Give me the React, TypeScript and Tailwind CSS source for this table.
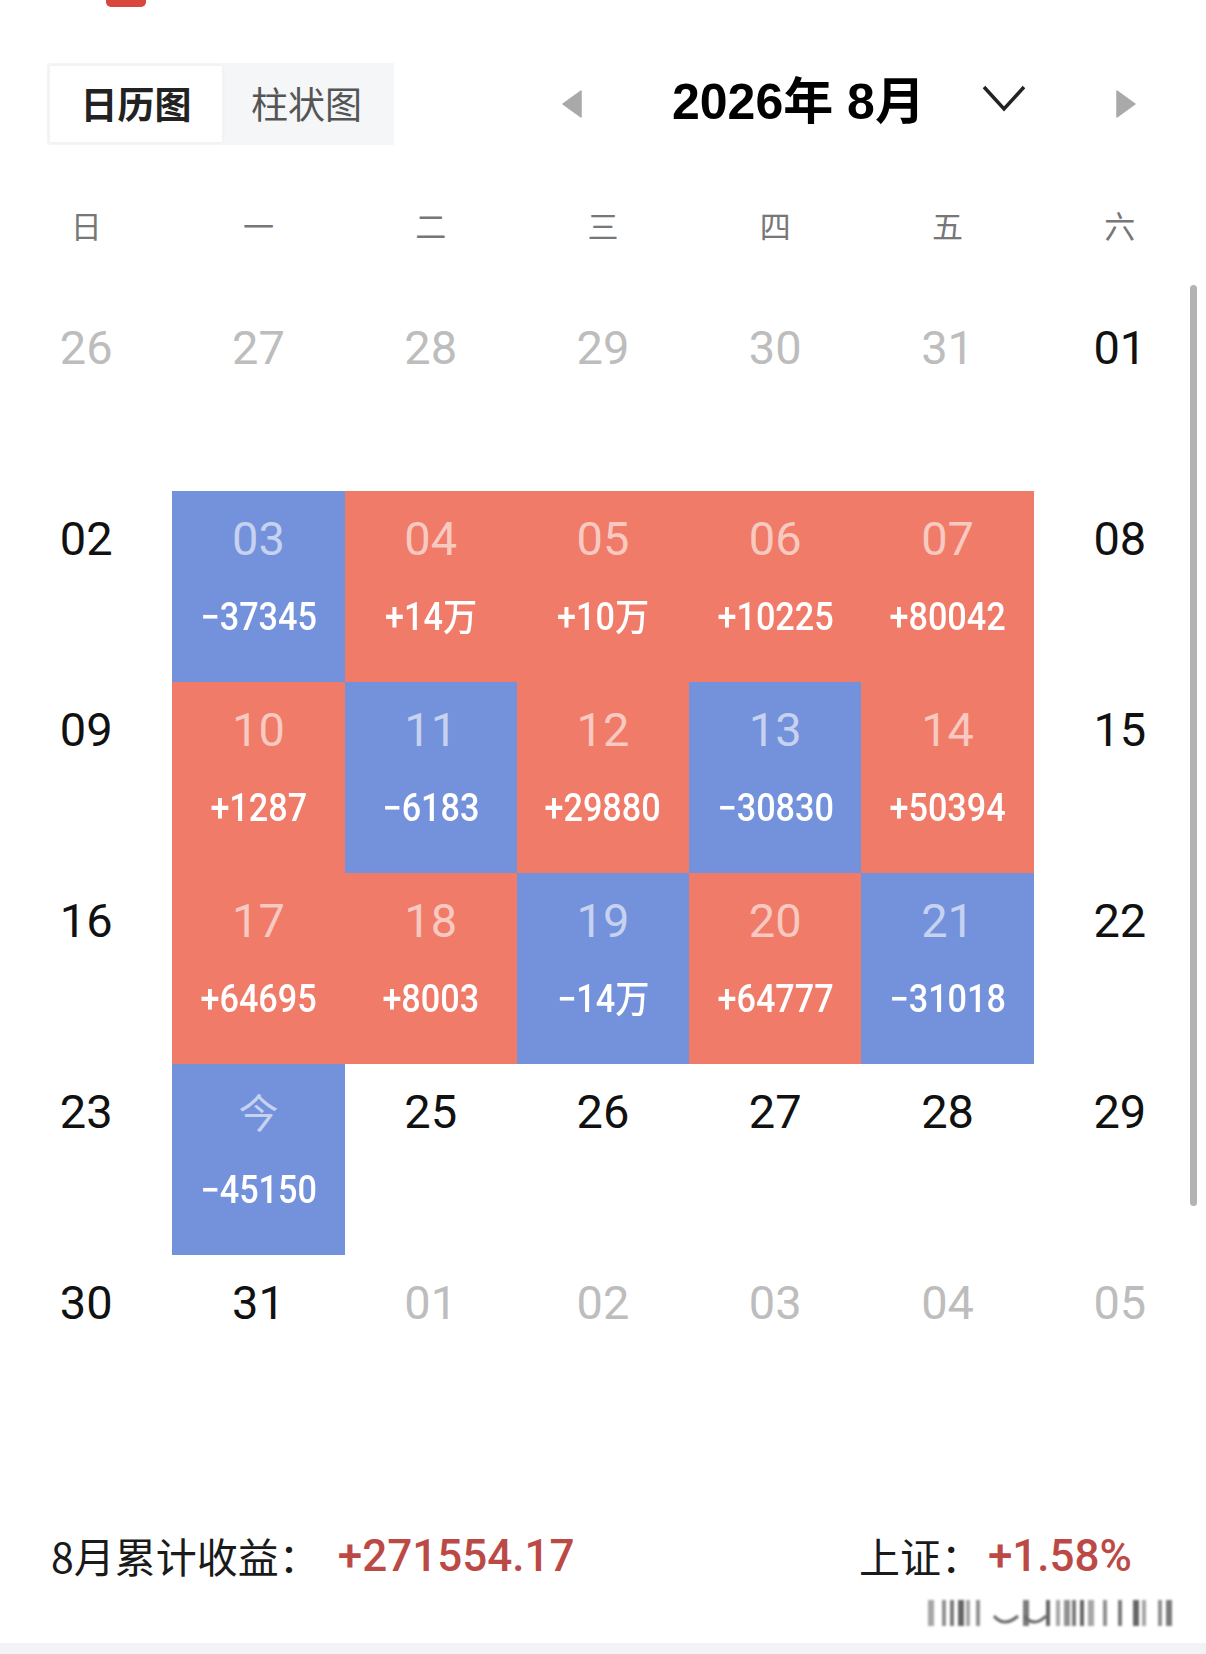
import React from 'react';

type Tone = 'muted' | 'normal' | 'red' | 'blue';

interface Day {
  label: string;
  tone: Tone;
  value?: string;
}

const m = (label: string): Day => ({ label, tone: 'muted' });
const n = (label: string): Day => ({ label, tone: 'normal' });
const r = (label: string, value: string): Day => ({ label, tone: 'red', value });
const b = (label: string, value: string): Day => ({ label, tone: 'blue', value });

const weekdays = ['日', '一', '二', '三', '四', '五', '六'];

const weeks: Day[][] = [
  [m('26'), m('27'), m('28'), m('29'), m('30'), m('31'), n('01')],
  [n('02'), b('03', '−37345'), r('04', '+14万'), r('05', '+10万'), r('06', '+10225'), r('07', '+80042'), n('08')],
  [n('09'), r('10', '+1287'), b('11', '−6183'), r('12', '+29880'), b('13', '−30830'), r('14', '+50394'), n('15')],
  [n('16'), r('17', '+64695'), r('18', '+8003'), b('19', '−14万'), r('20', '+64777'), b('21', '−31018'), n('22')],
  [n('23'), b('今', '−45150'), n('25'), n('26'), n('27'), n('28'), n('29')],
  [n('30'), n('31'), m('01'), m('02'), m('03'), m('04'), m('05')],
];

function DayCell({ day }: { day: Day }) {
  const bg = day.tone === 'red' ? 'bg-[#ef7b68]' : day.tone === 'blue' ? 'bg-[#7491dc]' : '';
  const color =
    day.tone === 'muted' ? 'text-[#bdbdbd]' : day.tone === 'normal' ? 'text-[#111111]' : 'text-white/60';
  const isCjk = day.label === '今';

  return (
    <div className={`h-[191px] flex flex-col items-center ${bg}`}>
      <div
        className={`mt-[20px] h-[55px] leading-[55px] ${color} ${
          isCjk
            ? "text-[40px] font-['Noto_Sans_CJK_SC',sans-serif]"
            : "text-[47px] font-['Roboto','Noto_Sans_CJK_SC',sans-serif]"
        }`}
      >
        {day.label}
      </div>
      {day.value && (
        <div className="mt-[27px] h-[48px] leading-[48px] text-white text-[38px] font-medium font-['Roboto','Noto_Sans_CJK_SC',sans-serif]">
          <span className="inline-block scale-x-[0.9] whitespace-nowrap">{day.value}</span>
        </div>
      )}
    </div>
  );
}

function Triangle({ dir }: { dir: 'left' | 'right' }) {
  return (
    <svg width="20" height="28" viewBox="0 0 20 28">
      <polygon
        points={dir === 'left' ? '19,1 19,27 1,14' : '1,1 1,27 19,14'}
        fill="#a9a9a9"
        stroke="#a9a9a9"
        strokeWidth="1.5"
        strokeLinejoin="round"
      />
    </svg>
  );
}

export default function App() {
  return (
    <div className="relative w-[1206px] h-[1654px] overflow-hidden bg-white flex flex-col font-['Noto_Sans_CJK_SC',sans-serif]">
      {/* top red marker */}
      <div className="ml-[106px] w-[40px] h-[7px] rounded-b-[5px] bg-[#d9463d]" />

      {/* header: tabs + month switcher */}
      <div className="mt-[56px] h-[82px] flex items-center">
        <div className="ml-[47px] w-[347px] h-[82px] flex bg-[#f5f6f8] p-[3px]">
          <div className="w-[172px] h-full bg-white flex items-center justify-center text-[37px] font-bold text-[#222222] shadow-[0_0_6px_rgba(0,0,0,0.04)]">
            日历图
          </div>
          <div className="flex-1 flex items-center justify-center text-[37px] text-[#555555]">柱状图</div>
        </div>
        <div className="ml-[168px] flex items-center">
          <Triangle dir="left" />
        </div>
        <div className="ml-[90px] -mt-[4px] text-[50px] font-bold text-black font-['Liberation_Sans','Noto_Sans_CJK_SC',sans-serif] whitespace-nowrap">
          2026年 8月
        </div>
        <svg className="ml-[57px] -mt-[12px]" width="44" height="28" viewBox="0 0 44 28">
          <polyline points="2,3 22,25 42,3" fill="none" stroke="#222222" strokeWidth="3.5" />
        </svg>
        <div className="ml-[90px] flex items-center">
          <Triangle dir="right" />
        </div>
      </div>

      {/* weekday header */}
      <div className="mt-[35px] h-[90px] grid grid-cols-7">
        {weekdays.map((w) => (
          <div key={w} className="flex items-center justify-center text-[31px] text-[#777777]">
            {w}
          </div>
        ))}
      </div>

      {/* calendar grid */}
      <div className="mt-[30px] grid grid-cols-7">
        {weeks.flat().map((d, i) => (
          <DayCell key={i} day={d} />
        ))}
      </div>

      {/* summary */}
      <div className="mt-[80px] h-[60px] flex items-center justify-between pl-[51px] pr-[74px]">
        <div className="flex items-center">
          <span className="text-[41px] text-[#1a1a1a]">8月累计收益：</span>
          <span className="ml-[18px] text-[44px] font-medium text-[#bb4a47] font-['Roboto',sans-serif]">+271554.17</span>
        </div>
        <div className="flex items-center">
          <span className="text-[41px] text-[#1a1a1a]">上证：</span>
          <span className="ml-[6px] text-[44px] font-medium text-[#bb4a47] font-['Roboto',sans-serif]">+1.58%</span>
        </div>
      </div>

      {/* blurred watermark strip */}
      <div className="mt-[12px] flex justify-end pr-[28px]">
        <svg width="250" height="30" viewBox="0 0 250 30" className="blur-[1px] opacity-80">
          {[0, 14, 22, 30, 38, 48, 95, 118, 128, 136, 144, 152, 160, 175, 190, 205, 214, 230, 238].map((x, i) => (
            <rect key={i} x={x} y={2} width={i % 3 === 0 ? 6 : 4} height={26} fill="#222222" opacity={0.5 + (i % 4) * 0.12} />
          ))}
          <path d="M66 18 q10 12 24 0" stroke="#444444" strokeWidth="3" fill="none" />
          <path d="M96 18 q10 12 22 0" stroke="#444444" strokeWidth="3" fill="none" />
        </svg>
      </div>

      {/* bottom band */}
      <div className="absolute left-0 bottom-0 w-full h-[11px] bg-[#f1f3f6]" />

      {/* scrollbar */}
      <div className="absolute right-[9px] top-[285px] w-[7px] h-[921px] rounded-full bg-[#b3b3b3]" />
    </div>
  );
}
